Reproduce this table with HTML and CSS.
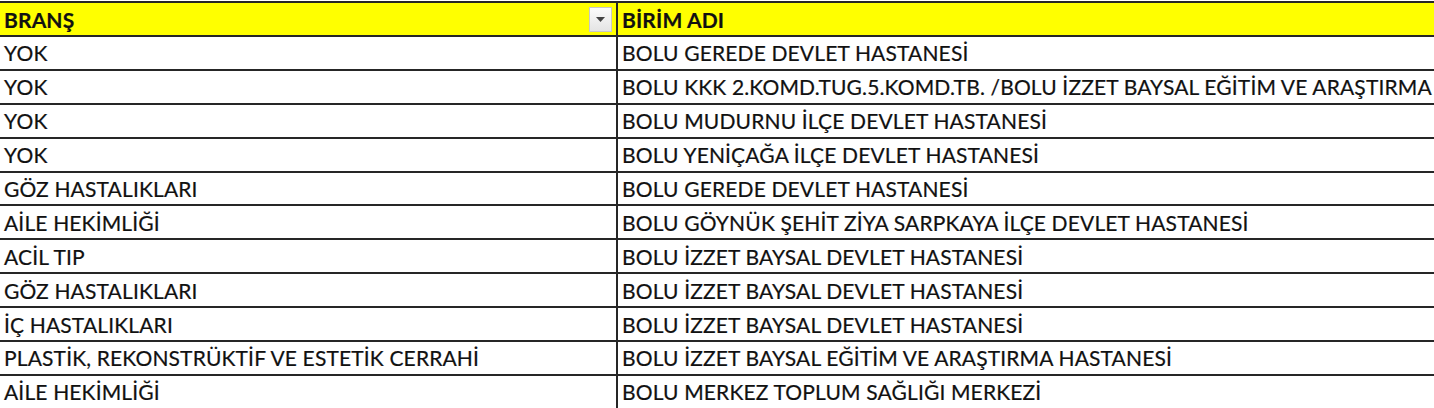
FILE: index.html
```html
<!DOCTYPE html>
<html lang="tr">
<head>
<meta charset="utf-8">
<link rel="stylesheet" href="styles.css">
</head>
<body>
<table class="sheet">
  <colgroup><col class="col-brans"><col class="col-birim"></colgroup>
  <thead>
    <tr class="head">
      <th><div class="hcell"><span>BRANŞ</span><span class="filter"><svg width="9" height="5" viewBox="0 0 9 5"><path d="M0 0H9L4.5 5Z" fill="#444"/></svg></span></div></th>
      <th><div class="hcell"><span>BİRİM ADI</span></div></th>
    </tr>
  </thead>
  <tbody>
    <tr><td>YOK</td><td>BOLU GEREDE DEVLET HASTANESİ</td></tr>
    <tr><td>YOK</td><td class="clip">BOLU KKK 2.KOMD.TUG.5.KOMD.TB. /BOLU İZZET BAYSAL EĞİTİM VE ARAŞTIRMA HASTANESİ</td></tr>
    <tr><td>YOK</td><td>BOLU MUDURNU İLÇE DEVLET HASTANESİ</td></tr>
    <tr><td>YOK</td><td>BOLU YENİÇAĞA İLÇE DEVLET HASTANESİ</td></tr>
    <tr><td>GÖZ HASTALIKLARI</td><td>BOLU GEREDE DEVLET HASTANESİ</td></tr>
    <tr><td>AİLE HEKİMLİĞİ</td><td>BOLU GÖYNÜK ŞEHİT ZİYA SARPKAYA İLÇE DEVLET HASTANESİ</td></tr>
    <tr><td>ACİL TIP</td><td>BOLU İZZET BAYSAL DEVLET HASTANESİ</td></tr>
    <tr><td>GÖZ HASTALIKLARI</td><td>BOLU İZZET BAYSAL DEVLET HASTANESİ</td></tr>
    <tr><td>İÇ HASTALIKLARI</td><td>BOLU İZZET BAYSAL DEVLET HASTANESİ</td></tr>
    <tr><td>PLASTİK, REKONSTRÜKTİF VE ESTETİK CERRAHİ</td><td>BOLU İZZET BAYSAL EĞİTİM VE ARAŞTIRMA HASTANESİ</td></tr>
    <tr><td>AİLE HEKİMLİĞİ</td><td>BOLU MERKEZ TOPLUM SAĞLIĞI MERKEZİ</td></tr>
  </tbody>
</table>
</body>
</html>
```
FILE: styles.css
```css
html, body {
  margin: 0;
  padding: 0;
  background: #ffffff;
  overflow: hidden;
}
body {
  padding-top: 1px;
}
.sheet {
  border-collapse: collapse;
  table-layout: fixed;
  width: 1434px;
  font-family: Lato, "Open Sans", sans-serif;
  font-size: 21px;
  letter-spacing: 0.15px;
  color: #111111;
  -webkit-text-stroke: 0.2px #111111;
}
.col-brans { width: 617px; }
.col-birim { width: 817px; }
.sheet th, .sheet td {
  border: 2px solid #262626;
  padding: 0 0 0 4px;
  height: 33.9px;
  text-align: left;
  white-space: nowrap;
  overflow: visible;
  box-sizing: border-box;
}
.sheet th:first-child, .sheet td:first-child { border-left: none; }
.sheet th:last-child, .sheet td:last-child { border-right: none; }
.sheet td.clip { overflow: hidden; text-overflow: clip; }
.head th {
  background: #ffff00;
  font-weight: 700;
  height: 34px;
  padding-right: 4px;
}
.hcell {
  display: flex;
  align-items: center;
  justify-content: space-between;
}
.filter {
  width: 23px;
  height: 25px;
  box-sizing: border-box;
  border: 1px solid #c8c8c8;
  background: linear-gradient(#fbfbfb, #e4e4e4);
  display: flex;
  align-items: center;
  justify-content: center;
  -webkit-text-stroke: 0;
}
```
